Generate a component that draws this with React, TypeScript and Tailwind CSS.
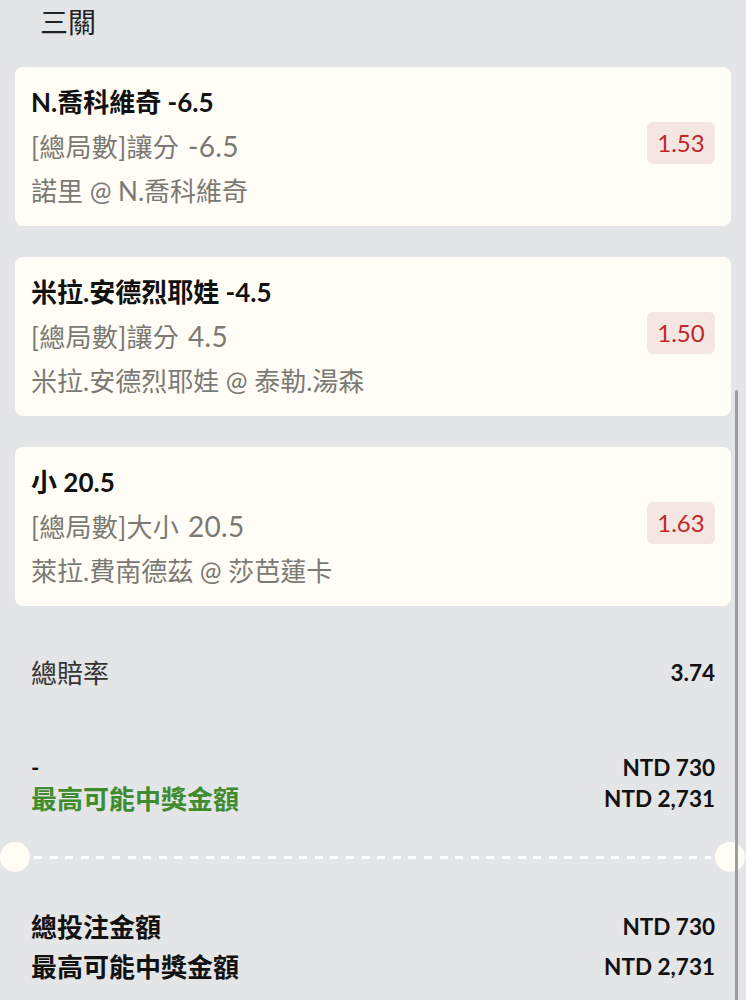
const FONT = "font-['Lato','Noto_Sans_CJK_TC',sans-serif]";

type Leg = { title: string; market: string; line: string; match: string; odds: string };

const LEGS: Leg[] = [
  { title: "N.喬科維奇 -6.5", market: "[總局數]讓分", line: "-6.5", match: "諾里 @ N.喬科維奇", odds: "1.53" },
  { title: "米拉.安德烈耶娃 -4.5", market: "[總局數]讓分", line: "4.5", match: "米拉.安德烈耶娃 @ 泰勒.湯森", odds: "1.50" },
  { title: "小 20.5", market: "[總局數]大小", line: "20.5", match: "萊拉.費南德茲 @ 莎芭蓮卡", odds: "1.63" },
];

function LegCard({ leg }: { leg: Leg }) {
  return (
    <div className="flex items-center justify-between rounded-lg bg-[#fffdf5] h-[159px] pl-4 pr-4">
      <div className="flex flex-col">
        <div className="text-[26px] font-bold text-[#111] leading-[44px]">{leg.title}</div>
        <div className="text-[26px] text-[#7a7a74] leading-[44px] tracking-[0.3px]">
          {leg.market}
          <span className="ml-[9px] text-[28px]">{leg.line}</span>
        </div>
        <div className="text-[26px] text-[#7a7a74] leading-[44px]">{leg.match}</div>
      </div>
      <div className="mb-[7px] rounded-md bg-[#f6e6e1] text-[#c0262b] text-[24px] w-[68px] h-[42px] flex items-center justify-center">
        {leg.odds}
      </div>
    </div>
  );
}

export default function App() {
  return (
    <div className={`${FONT} relative w-[746px] h-[1000px] overflow-hidden bg-[#e4e5e7]`}>
      {/* overlay scrollbar thumb */}
      <div className="absolute right-[8px] top-[390px] h-[620px] w-[3px] rounded-full bg-[#9c9c9c]" />

      <div className="pl-[40px] pt-[3px] h-[67px] text-[28px] text-[#222] leading-[38px]">三關</div>

      <div className="flex flex-col gap-[31px] px-[15px]">
        {LEGS.map((leg) => (
          <LegCard key={leg.odds} leg={leg} />
        ))}
      </div>

      <div className="flex items-center justify-between px-[31px] mt-[51px] h-[32px]">
        <span className="text-[26px] text-[#333]">總賠率</span>
        <span className="text-[22.5px] font-bold text-[#111]">3.74</span>
      </div>

      <div className="flex flex-col px-[31px] mt-[64px]">
        <div className="flex items-center justify-between h-[30px]">
          <span className="text-[22.5px] font-bold text-[#111]">-</span>
          <span className="text-[22.5px] font-bold text-[#111]">NTD 730</span>
        </div>
        <div className="flex items-center justify-between h-[32px]">
          <span className="text-[26px] font-bold text-[#3f8c2f]">最高可能中獎金額</span>
          <span className="text-[22.5px] font-bold text-[#111]">NTD 2,731</span>
        </div>
      </div>

      {/* perforation */}
      <div className="flex items-center mt-[27px] h-[30px]">
        <div className="w-[30px] h-[30px] rounded-full bg-[#fffdf4] shrink-0" />
        <div className="flex-1 mx-[4px] h-[3px] bg-[repeating-linear-gradient(to_right,#ffffff_0_8px,transparent_8px_15.6px)]" />
        <div className="w-[30px] h-[30px] rounded-full bg-[#fffdf4] shrink-0 mr-[1px]" />
      </div>

      <div className="flex flex-col px-[31px] mt-[39px] gap-[8px]">
        <div className="flex items-center justify-between h-[32px]">
          <span className="text-[26px] font-bold text-[#111]">總投注金額</span>
          <span className="text-[22.5px] font-bold text-[#111]">NTD 730</span>
        </div>
        <div className="flex items-center justify-between h-[32px]">
          <span className="text-[26px] font-bold text-[#111]">最高可能中獎金額</span>
          <span className="text-[22.5px] font-bold text-[#111]">NTD 2,731</span>
        </div>
      </div>
    </div>
  );
}
